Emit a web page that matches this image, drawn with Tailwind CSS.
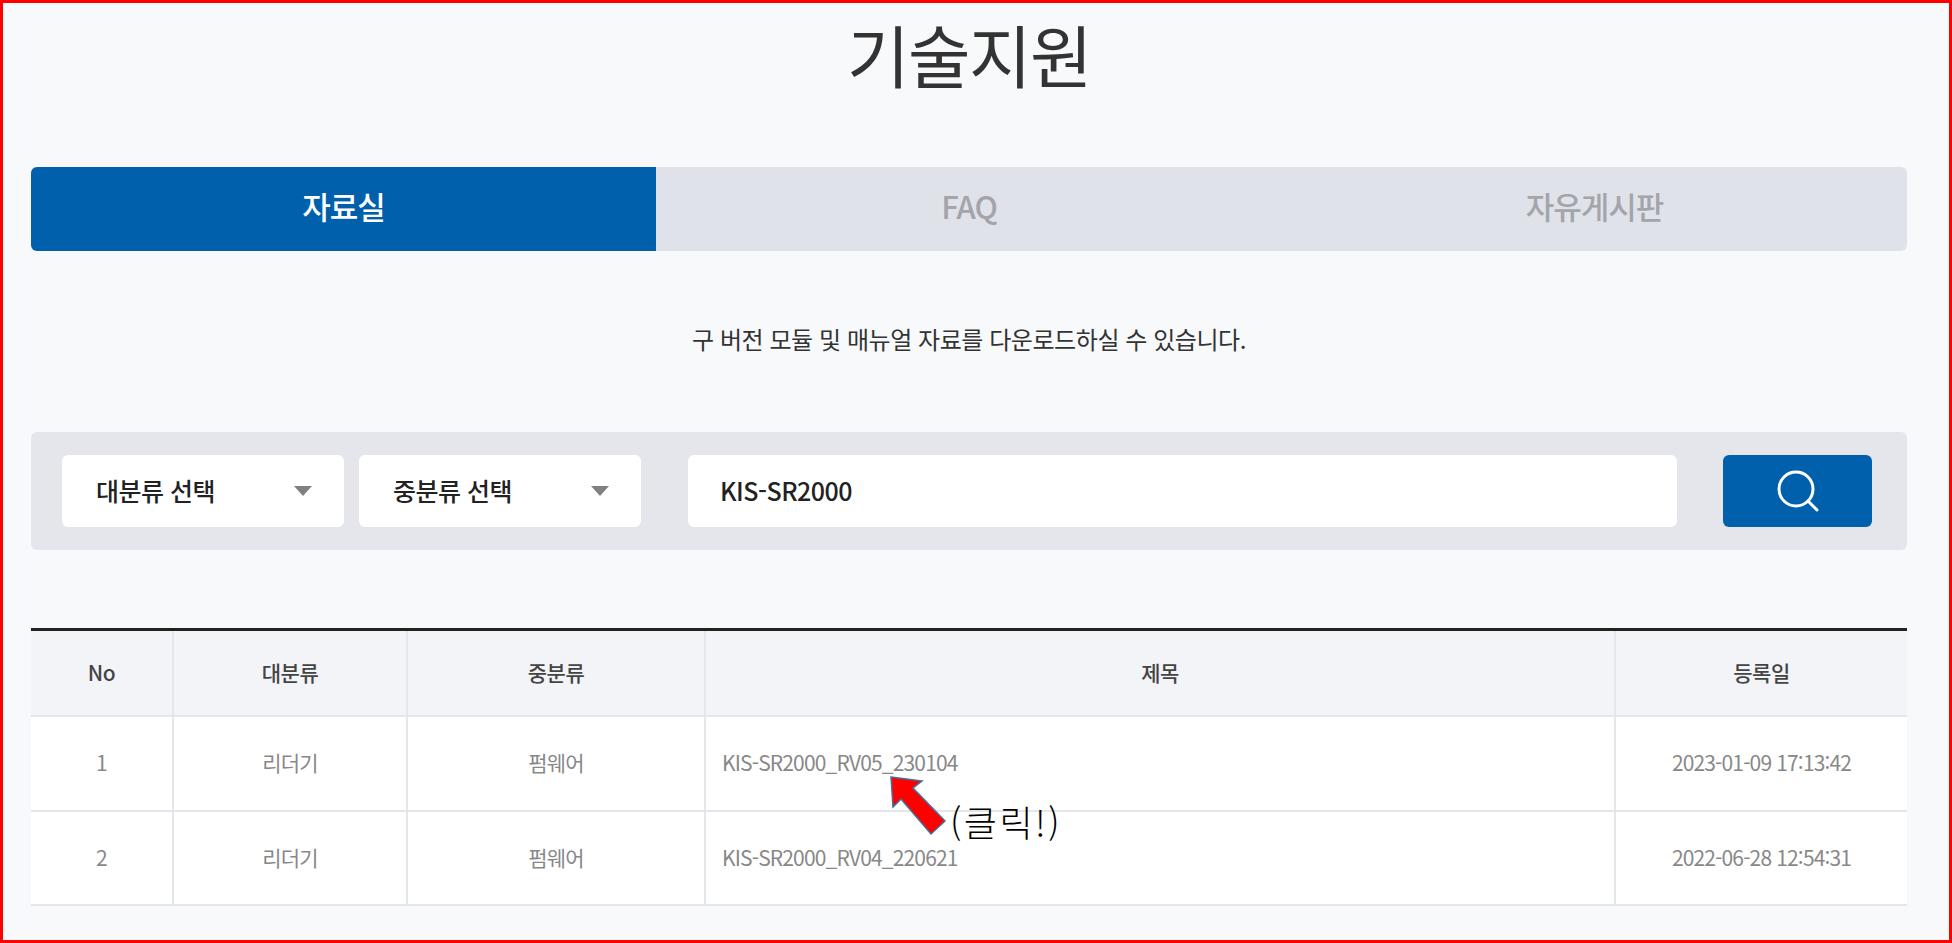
<!DOCTYPE html>
<html lang="ko">
<head>
  <meta charset="UTF-8">
  <title>기술지원</title>
  <script src="https://cdn.jsdelivr.net/npm/@tailwindcss/browser@4"></script>
</head>
<body class="bg-[#f8f9fb] font-['Noto_Sans_CJK_KR','Noto_Sans',sans-serif]">
  <div class="relative h-[943px] overflow-hidden border-[3px] border-[#ff0000] bg-[#f8f9fb] pl-[28px] pr-[42px]">

    <!-- 제목 -->
    <h1 class="h-[164px] pt-[10px] text-center text-[68px] leading-[82px] font-normal tracking-[-1.5px] text-[#333333]">기술지원</h1>

    <!-- 탭 -->
    <div class="flex h-[84px] overflow-hidden rounded-[6px] bg-[#e0e2ea] text-[31px] leading-[40px] tracking-[-1px]">
      <div class="flex w-[625px] items-center justify-center bg-[#0060ac] pb-[6px] font-medium text-white">자료실</div>
      <div class="flex w-[626px] items-center justify-center pb-[6px] font-medium text-[#a3a5aa]">FAQ</div>
      <div class="flex flex-1 items-center justify-center pb-[6px] font-medium text-[#a3a5aa]">자유게시판</div>
    </div>

    <p class="mt-[68px] h-[39px] text-center text-[24px] leading-[39px] tracking-[-0.45px] text-[#333333]">구 버전 모듈 및 매뉴얼 자료를 다운로드하실 수 있습니다.</p>

    <!-- 검색 -->
    <div class="mt-[74px] flex h-[118px] items-center rounded-[6px] bg-[#e5e6eb] pl-[31px] pr-[34px] text-[#222222]">
      <div class="flex h-[72px] w-[282px] items-center justify-between rounded-[6px] bg-white pl-[34px] pr-[32px] text-[25px] font-medium tracking-[-0.5px]">
        대분류 선택
        <span class="h-0 w-0 border-x-[9px] border-t-[10px] border-x-transparent border-t-[#808080]"></span>
      </div>
      <div class="ml-[15px] flex h-[72px] w-[282px] items-center justify-between rounded-[6px] bg-white pl-[34px] pr-[32px] text-[25px] font-medium tracking-[-0.5px]">
        중분류 선택
        <span class="h-0 w-0 border-x-[9px] border-t-[10px] border-x-transparent border-t-[#808080]"></span>
      </div>
      <div class="ml-[47px] flex h-[72px] w-[989px] items-center rounded-[6px] bg-white pl-[32px] text-[25px] font-medium tracking-[-0.5px]">KIS-SR2000</div>
      <div class="ml-[46px] flex h-[72px] w-[149px] items-center justify-center rounded-[6px] bg-[#0060ac]">
        <svg width="44" height="44" viewBox="0 0 44 44" fill="none" stroke="white" stroke-width="3">
          <circle cx="20" cy="20" r="17"/>
          <path d="M32 32l9 9" stroke-linecap="round"/>
        </svg>
      </div>
    </div>

    <!-- 목록 -->
    <table class="mt-[78px] w-full table-fixed border-collapse border-t-[3px] border-t-[#222222] text-center">
      <colgroup>
        <col class="w-[142px]"><col class="w-[234px]"><col class="w-[298px]"><col class="w-[910px]"><col>
      </colgroup>
      <thead>
        <tr class="h-[86px] border-b-2 border-[#e4e6ec] bg-[#f3f4f7] text-[21px] font-medium tracking-[-0.5px] text-[#444444]">
          <th class="font-medium">No</th>
          <th class="border-l-2 border-[#e4e6ec] font-medium">대분류</th>
          <th class="border-l-2 border-[#e4e6ec] font-medium">중분류</th>
          <th class="border-l-2 border-[#e4e6ec] font-medium">제목</th>
          <th class="border-l-2 border-[#e4e6ec] font-medium">등록일</th>
        </tr>
      </thead>
      <tbody class="bg-white text-[21px] tracking-[-0.85px] text-[#888888]">
        <tr class="h-[95px] border-b-2 border-[#e4e6ec]">
          <td>1</td>
          <td class="border-l-2 border-[#e4e6ec]">리더기</td>
          <td class="border-l-2 border-[#e4e6ec]">펌웨어</td>
          <td class="border-l-2 border-[#e4e6ec] pl-[16px] text-left">KIS-SR2000_RV05_230104</td>
          <td class="border-l-2 border-[#e4e6ec]">2023-01-09 17:13:42</td>
        </tr>
        <tr class="h-[94px] border-b-2 border-[#e4e6ec]">
          <td>2</td>
          <td class="border-l-2 border-[#e4e6ec]">리더기</td>
          <td class="border-l-2 border-[#e4e6ec]">펌웨어</td>
          <td class="border-l-2 border-[#e4e6ec] pl-[16px] text-left">KIS-SR2000_RV04_220621</td>
          <td class="border-l-2 border-[#e4e6ec]">2022-06-28 12:54:31</td>
        </tr>
      </tbody>
    </table>

    <!-- 화살표 주석 -->
    <svg class="absolute left-[885px] top-[770px]" width="65" height="70" viewBox="0 0 65 70">
      <path d="M3 4l31 4-9 7 32 33-14 13-30-35-8 8z" fill="#ff0000" stroke="#41719c" stroke-width="1.5"/>
    </svg>
    <div class="absolute left-[947px] top-[796px] text-[36px] leading-[44px] font-light tracking-[2.5px] text-black">(클릭!)</div>
  </div>
</body>
</html>
